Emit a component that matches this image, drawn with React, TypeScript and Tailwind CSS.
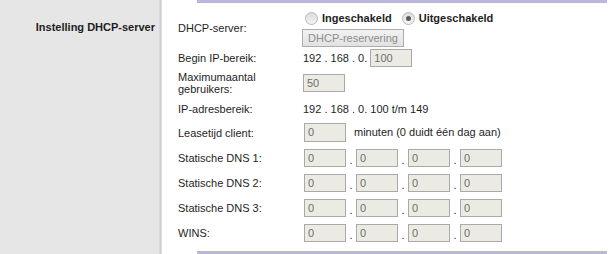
const font = { fontFamily: '"Liberation Sans", Arial, sans-serif' };

function Box({ value, className = '' }: { value: string; className?: string }) {
  return (
    <div
      className={`w-[42px] h-[18px] border border-[#a9a9a9] bg-[#ebebe4] pl-[3px] text-[#6d6d6d] leading-[16px] ${className}`}
    >
      {value}
    </div>
  );
}

function Radio({ checked }: { checked?: boolean }) {
  return (
    <span className="w-[13px] h-[13px] rounded-full border border-[#b8b8b8] bg-gradient-to-b from-[#dcdcdc] to-[#f4f4f4] flex items-center justify-center">
      {checked && <span className="w-[5px] h-[5px] rounded-full bg-[#5a5a5a]" />}
    </span>
  );
}

function Row({ label, h, children }: { label: React.ReactNode; h: string; children: React.ReactNode }) {
  return (
    <div className={`flex items-center ${h}`}>
      <div className="w-[125px] shrink-0 leading-[12px]">{label}</div>
      <div className="flex items-center">{children}</div>
    </div>
  );
}

function IpRow({ label }: { label: string }) {
  return (
    <Row label={label} h="h-[25px]">
      <div className="flex items-end ml-[1px]">
        <Box value="0" />
        <span className="w-[10px] text-center leading-[14px]">.</span>
        <Box value="0" />
        <span className="w-[10px] text-center leading-[14px]">.</span>
        <Box value="0" />
        <span className="w-[10px] text-center leading-[14px]">.</span>
        <Box value="0" />
      </div>
    </Row>
  );
}

export default function App() {
  return (
    <div className="flex w-[614px] h-[254px] bg-white text-[11px] text-[#1e1e1e] overflow-hidden" style={font}>
      {/* left section title */}
      <div className="w-[159px] shrink-0 bg-[#e6e6e6] pt-[21px] pr-[4px] text-right font-bold leading-[13px]">
        Instelling DHCP-server
      </div>
      <div className="w-[1px] bg-[#d9d9d9]" />
      <div className="w-[1px] bg-[#cdcdcd]" />
      <div className="w-[1px] bg-[#e2e2e2]" />

      <div className="flex-1 flex flex-col">
        <div className="ml-[35px] w-[410px] h-[3px] bg-[#b9b8d8] shrink-0" />
        <div className="pl-[16px] pt-[5px]">
          <Row label="DHCP-server:" h="h-[40px]">
            <div className="flex flex-col">
              <div className="flex items-center h-[18px] font-bold">
                <span className="ml-[2px]"><Radio /></span>
                <span className="ml-[4px]">Ingeschakeld</span>
                <span className="ml-[10px]"><Radio checked /></span>
                <span className="ml-[4px]">Uitgeschakeld</span>
              </div>
              <div className="mt-[2px] -ml-[1px] w-[102px] h-[18px] border border-[#adadad] bg-gradient-to-b from-[#f2f2f2] to-[#e2e2e2] text-[#8c8c8c] flex items-center justify-center">
                DHCP-reservering
              </div>
            </div>
          </Row>
          <Row label="Begin IP-bereik:" h="h-[20px]">
            <span>192 . 168 . 0.&nbsp;</span>
            <Box value="100" className="h-[17px] w-[41px] leading-[15px]" />
          </Row>
          <Row
            label={
              <span className="leading-[12px]">
                Maximumaantal
                <br />
                gebruikers:
              </span>
            }
            h="h-[30px]"
          >
            <Box value="50" className="h-[17px] leading-[15px]" />
          </Row>
          <Row label="IP-adresbereik:" h="h-[22px]">
            <span>192 . 168 . 0. 100 t/m 149</span>
          </Row>
          <Row label="Leasetijd client:" h="h-[25px]">
            <Box value="0" className="ml-[1px] h-[19px] leading-[17px]" />
            <span className="ml-[8px]">minuten (0 duidt één dag aan)</span>
          </Row>
          <IpRow label="Statische DNS 1:" />
          <IpRow label="Statische DNS 2:" />
          <IpRow label="Statische DNS 3:" />
          <IpRow label="WINS:" />
        </div>
        <div className="ml-[35px] mt-[6px] w-[410px] h-[3px] bg-[#b9b8d8] shrink-0" />
      </div>
    </div>
  );
}
